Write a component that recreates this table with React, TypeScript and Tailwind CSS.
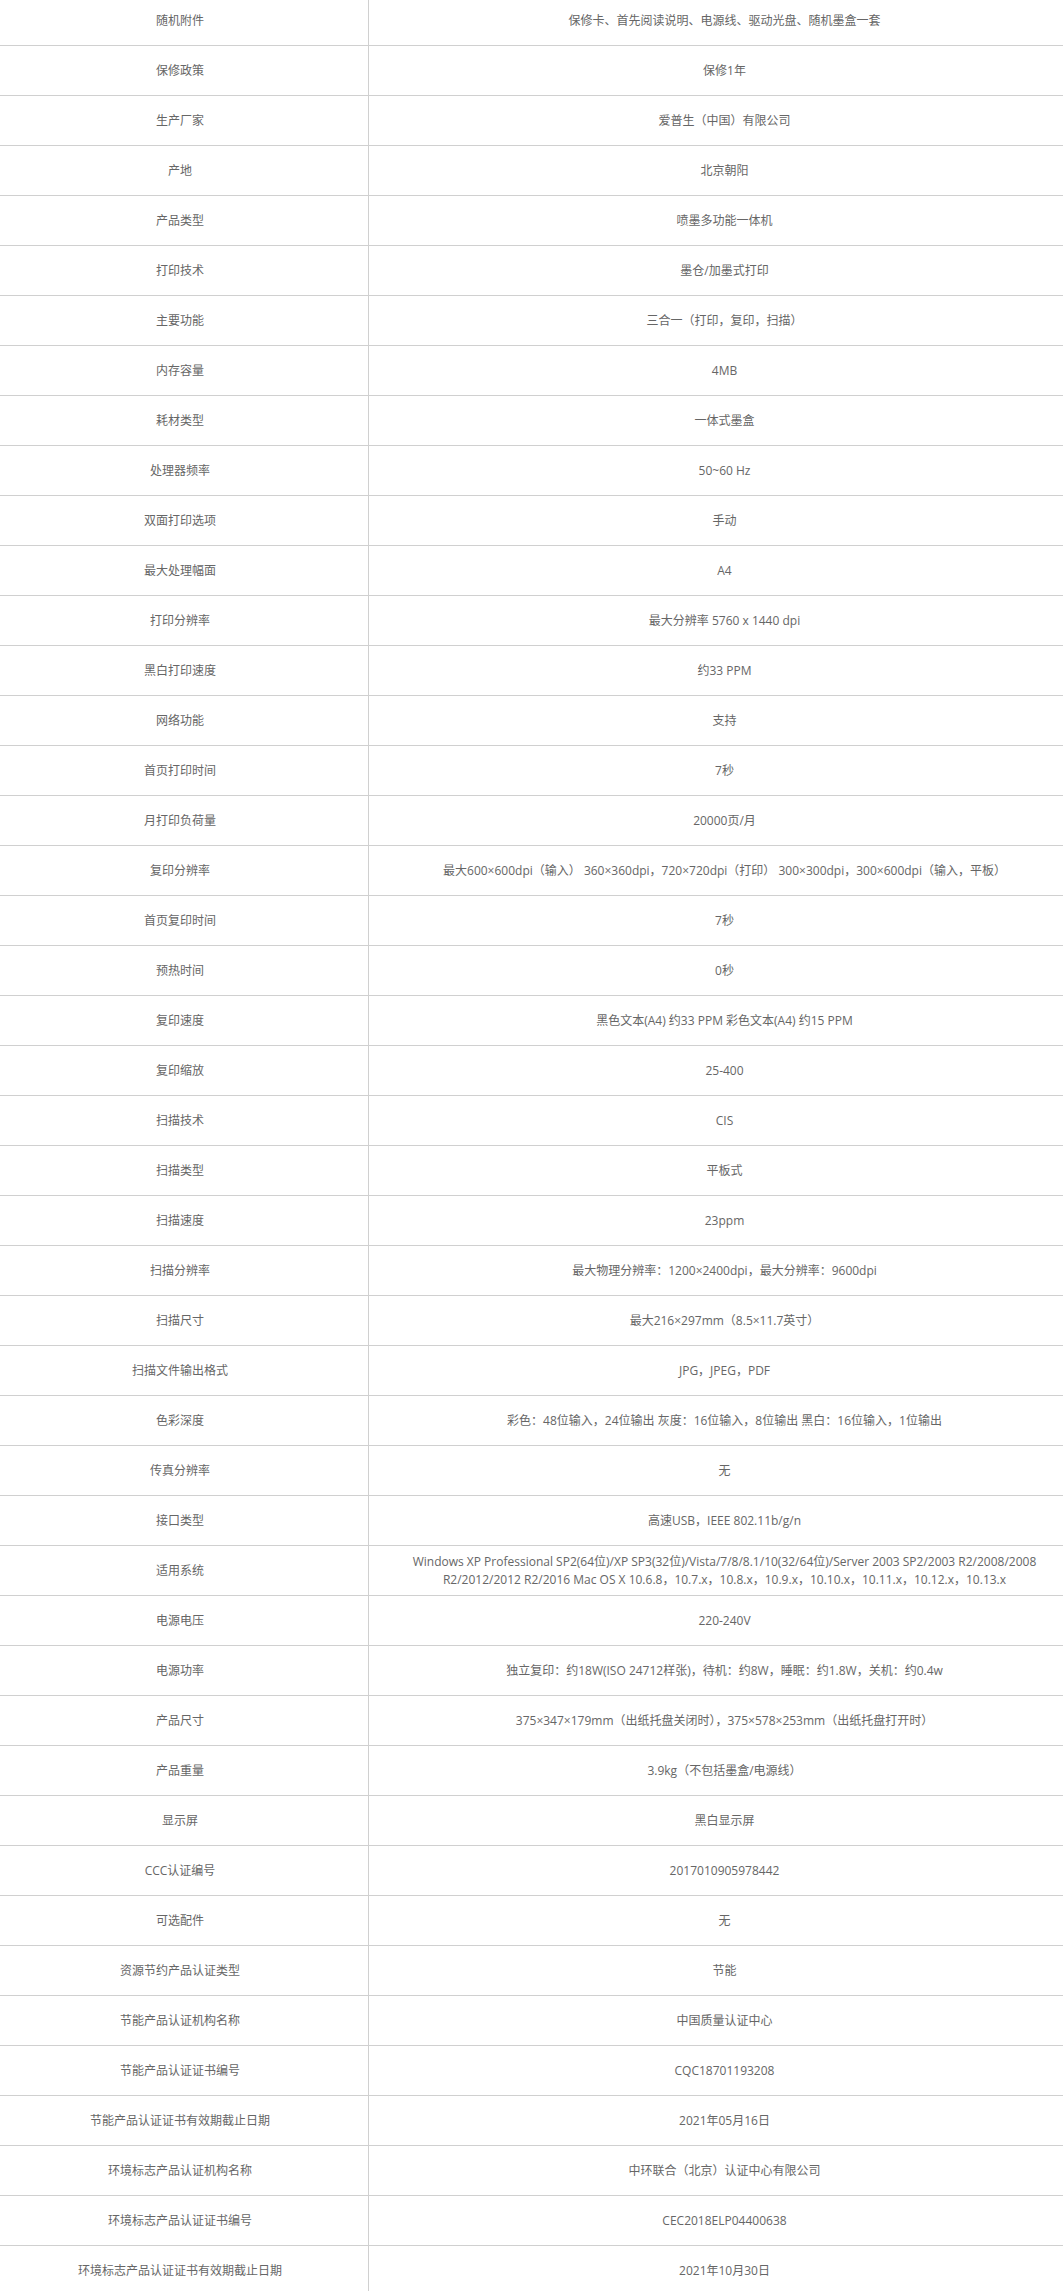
import React from 'react';

type SpecRow = { label: string; value: React.ReactNode };

const rows: SpecRow[] = [
  { label: '随机附件', value: '保修卡、首先阅读说明、电源线、驱动光盘、随机墨盒一套' },
  { label: '保修政策', value: '保修1年' },
  { label: '生产厂家', value: '爱普生（中国）有限公司' },
  { label: '产地', value: '北京朝阳' },
  { label: '产品类型', value: '喷墨多功能一体机' },
  { label: '打印技术', value: '墨仓/加墨式打印' },
  { label: '主要功能', value: '三合一（打印，复印，扫描）' },
  { label: '内存容量', value: '4MB' },
  { label: '耗材类型', value: '一体式墨盒' },
  { label: '处理器频率', value: '50~60 Hz' },
  { label: '双面打印选项', value: '手动' },
  { label: '最大处理幅面', value: 'A4' },
  { label: '打印分辨率', value: '最大分辨率 5760 x 1440 dpi' },
  { label: '黑白打印速度', value: '约33 PPM' },
  { label: '网络功能', value: '支持' },
  { label: '首页打印时间', value: '7秒' },
  { label: '月打印负荷量', value: '20000页/月' },
  {
    label: '复印分辨率',
    value: '最大600×600dpi（输入） 360×360dpi，720×720dpi（打印） 300×300dpi，300×600dpi（输入，平板）',
  },
  { label: '首页复印时间', value: '7秒' },
  { label: '预热时间', value: '0秒' },
  { label: '复印速度', value: '黑色文本(A4) 约33 PPM 彩色文本(A4) 约15 PPM' },
  { label: '复印缩放', value: '25-400' },
  { label: '扫描技术', value: 'CIS' },
  { label: '扫描类型', value: '平板式' },
  { label: '扫描速度', value: '23ppm' },
  { label: '扫描分辨率', value: '最大物理分辨率：1200×2400dpi，最大分辨率：9600dpi' },
  { label: '扫描尺寸', value: '最大216×297mm（8.5×11.7英寸）' },
  { label: '扫描文件输出格式', value: 'JPG，JPEG，PDF' },
  { label: '色彩深度', value: '彩色：48位输入，24位输出 灰度：16位输入，8位输出 黑白：16位输入，1位输出' },
  { label: '传真分辨率', value: '无' },
  { label: '接口类型', value: '高速USB，IEEE 802.11b/g/n' },
  {
    label: '适用系统',
    value: (
      <>
        <span className="block whitespace-nowrap">
          Windows XP Professional SP2(64位)/XP SP3(32位)/Vista/7/8/8.1/10(32/64位)/Server 2003 SP2/2003 R2/2008/2008
        </span>
        <span className="block whitespace-nowrap">
          R2/2012/2012 R2/2016 Mac OS X 10.6.8，10.7.x，10.8.x，10.9.x，10.10.x，10.11.x，10.12.x，10.13.x
        </span>
      </>
    ),
  },
  { label: '电源电压', value: '220-240V' },
  { label: '电源功率', value: '独立复印：约18W(ISO 24712样张)，待机：约8W，睡眠：约1.8W，关机：约0.4w' },
  { label: '产品尺寸', value: '375×347×179mm（出纸托盘关闭时），375×578×253mm（出纸托盘打开时）' },
  { label: '产品重量', value: '3.9kg（不包括墨盒/电源线）' },
  { label: '显示屏', value: '黑白显示屏' },
  { label: 'CCC认证编号', value: '2017010905978442' },
  { label: '可选配件', value: '无' },
  { label: '资源节约产品认证类型', value: '节能' },
  { label: '节能产品认证机构名称', value: '中国质量认证中心' },
  { label: '节能产品认证证书编号', value: 'CQC18701193208' },
  { label: '节能产品认证证书有效期截止日期', value: '2021年05月16日' },
  { label: '环境标志产品认证机构名称', value: '中环联合（北京）认证中心有限公司' },
  { label: '环境标志产品认证证书编号', value: 'CEC2018ELP04400638' },
  { label: '环境标志产品认证证书有效期截止日期', value: '2021年10月30日' },
];

export default function App() {
  return (
    <div className="h-[2291px] w-full overflow-hidden bg-white">
      {/* table is a bit wider than the window, cropped on both sides */}
      <div className="ml-[-8px] mt-[-4px] w-[1088px] font-['Open_Sans','Noto_Sans_CJK_SC',sans-serif] text-[12px] text-[#666666]">
        {rows.map((row) => (
          <div key={row.label} className="flex h-[50px] border-b border-[#d0d0d0]">
            <div className="flex w-[377px] shrink-0 items-center justify-center border-r border-[#d0d0d0] px-[10px] text-center">
              {row.label}
            </div>
            <div className="flex flex-1 flex-col items-center justify-center px-[10px] text-center leading-[18px]">
              {row.value}
            </div>
          </div>
        ))}
      </div>
    </div>
  );
}
